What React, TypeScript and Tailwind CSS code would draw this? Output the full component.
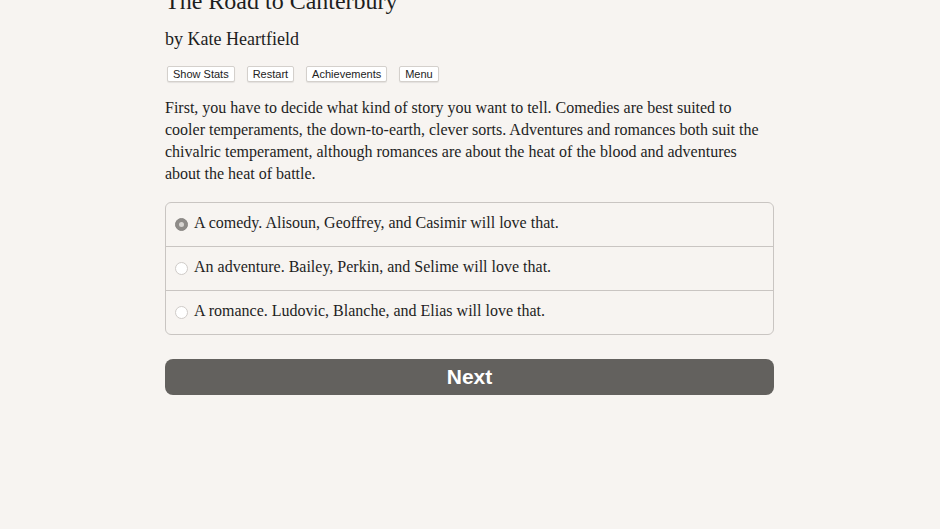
export default function App() {
  const options = [
    "A comedy. Alisoun, Geoffrey, and Casimir will love that.",
    "An adventure. Bailey, Perkin, and Selime will love that.",
    "A romance. Ludovic, Blanche, and Elias will love that.",
  ];
  return (
    <div className="min-h-[529px] w-full overflow-hidden bg-[#f7f4f1] text-[#1e1e1e]">
      <div className="ml-[165px] w-[609px] -mt-[14px]">
        <h1 className="font-['Liberation_Serif',serif] text-[24px] leading-[30px]">The Road to Canterbury</h1>
        <h2 className="mt-[11px] font-['Liberation_Serif',serif] text-[18px] leading-[24px]">by Kate Heartfield</h2>
        <div className="mt-[15px] flex gap-[12px] pl-[2px]">
          {["Show Stats", "Restart", "Achievements", "Menu"].map((b) => (
            <button
              key={b}
              className="h-[16px] rounded-[2px] border border-[#d4d0cc] bg-white px-[5px] font-['Liberation_Sans',sans-serif] text-[11px] leading-[14px] text-[#222] shadow-[0_1px_1px_rgba(0,0,0,0.08)]"
            >
              {b}
            </button>
          ))}
        </div>
        <p className="mt-[15px] font-['Liberation_Serif',serif] text-[16px] leading-[22px]">
          First, you have to decide what kind of story you want to tell. Comedies are best suited to cooler
          temperaments, the down-to-earth, clever sorts. Adventures and romances both suit the chivalric temperament,
          although romances are about the heat of the blood and adventures about the heat of battle.
        </p>
        <div className="mt-[17px] rounded-[6px] border border-[#c9c5c2] bg-[#f7f4f1]">
          {options.map((o, i) => (
            <label
              key={o}
              className={`flex items-center gap-[6px] pb-[3px] pl-[9px] font-['Liberation_Serif',serif] text-[16px] ${
                i > 0 ? "h-[44px] border-t border-[#c9c5c2]" : "h-[43px]"
              }`}
            >
              <span
                className={`mt-[2px] flex h-[13px] w-[13px] items-center justify-center rounded-full border ${
                  i === 0 ? "border-[#8a8784] bg-[#8f8c89]" : "border-[#cfcbc8] bg-white"
                }`}
              >
                {i === 0 && <span className="h-[5px] w-[5px] rounded-full bg-[#d8d5d2]" />}
              </span>
              {o}
            </label>
          ))}
        </div>
        <button className="mt-[24px] h-[36px] w-full rounded-[8px] bg-[#63615e] font-['Liberation_Sans',sans-serif] text-[21px] font-bold text-white">
          Next
        </button>
      </div>
    </div>
  );
}
